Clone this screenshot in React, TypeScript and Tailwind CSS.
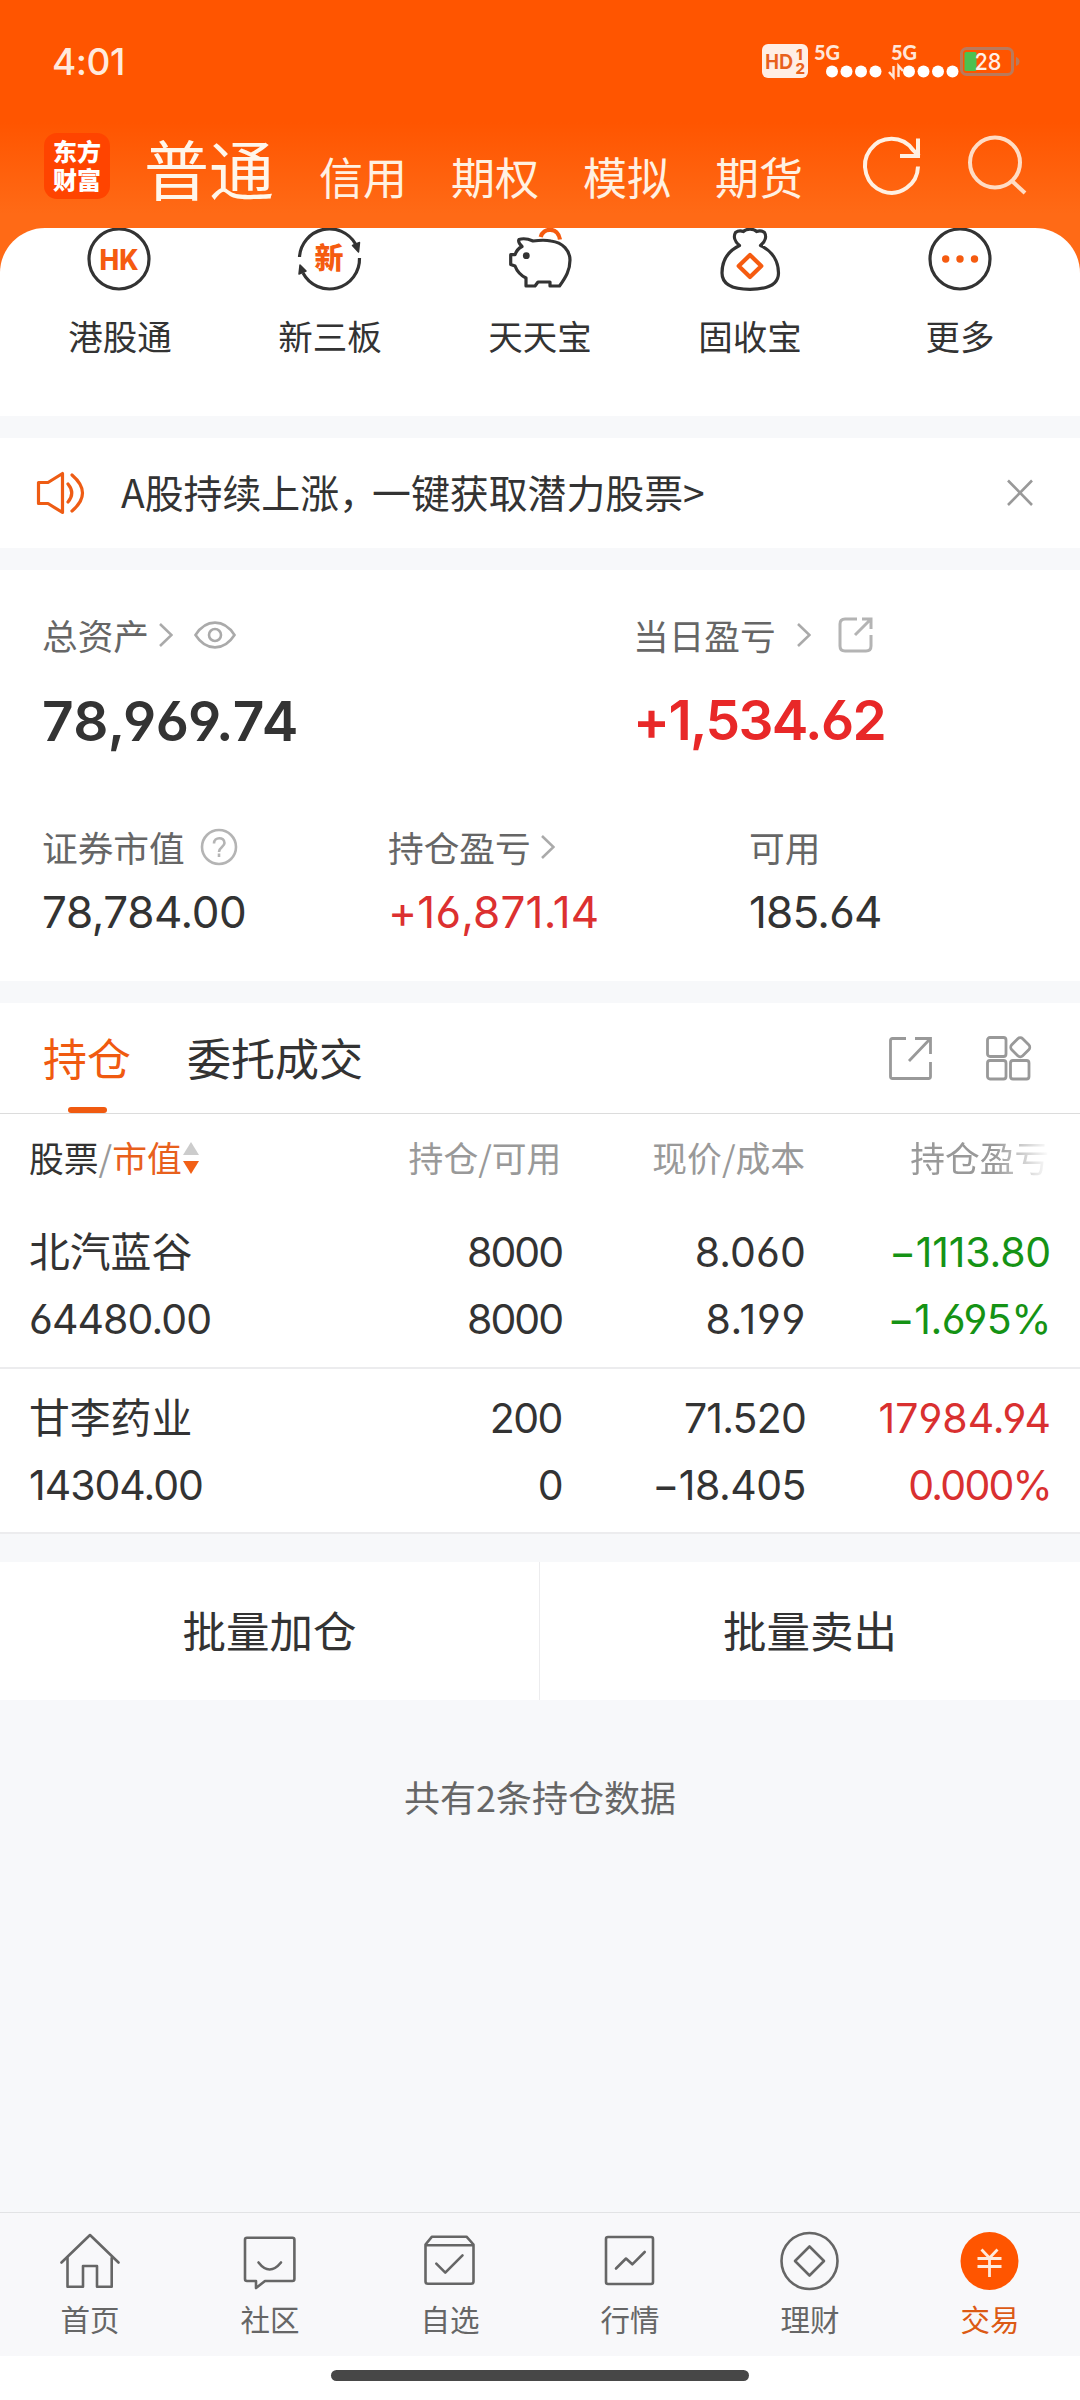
import React from 'react';

const num =
  "font-[Inter,'Noto_Sans_CJK_SC',sans-serif] [font-feature-settings:'cv03','cv04']";

type IconProps = { children: React.ReactNode };

function CategoryIcon({ children }: IconProps) {
  return (
    <svg width="70" height="66" viewBox="0 4 70 66" fill="none" stroke="#333" strokeWidth="3.200" strokeLinejoin="round">
      {children}
    </svg>
  );
}

function NavIcon({ children }: IconProps) {
  return (
    <svg width="60" height="60" viewBox="0 0 60 60" fill="none" stroke="#666" strokeWidth="2.600" strokeLinecap="round" strokeLinejoin="round">
      {children}
    </svg>
  );
}

function Chevron() {
  return (
    <svg width="14" height="24" viewBox="0 0 14 24" fill="none" stroke="#aaa" strokeWidth="2.600">
      <path d="M1 1L12.500 12L1 23" />
    </svg>
  );
}

function StatusBar() {
  return (
    <div className="flex h-[122px] items-center justify-between pr-[58px] pl-[52px]">
      <span className={`${num} mt-[2px] text-[37px] font-medium tracking-[-0.5px] text-[#ffeadd]`}>4:01</span>
      <svg width="262" height="60" viewBox="760 31 262 60" fontFamily="Lato, sans-serif" fontWeight="900">
        <rect x="762" y="44" width="46" height="34" rx="6" fill="#ffeee4" />
        <text x="765" y="69" fontSize="21.500" textLength="28" lengthAdjust="spacingAndGlyphs" fill="#e8601c">HD</text>
        <text x="796" y="60" fontSize="15" fill="#e8601c" fontFamily="Inter" fontWeight="800">1</text>
        <text x="795.500" y="74" fontSize="15" fill="#e8601c" fontFamily="Inter" fontWeight="800">2</text>
        <text x="814" y="59.500" fontSize="20.500" textLength="26" lengthAdjust="spacingAndGlyphs" fill="#ffe6d8">5G</text>
        <text x="891" y="59.500" fontSize="20.500" textLength="26" lengthAdjust="spacingAndGlyphs" fill="#ffe6d8">5G</text>
        {[832, 846.5, 861, 875.5, 909, 923.5, 938, 952.5].map((x) => (
          <circle key={x} cx={x} cy="71.500" r="6" fill="#fff" />
        ))}
        <path d="M893.500 66v11l-4.500-5M898.500 77V66l4.500 5" fill="none" stroke="#ffe6d8" strokeWidth="2.400" />
        <rect x="961.500" y="48.500" width="51" height="26" rx="5" fill="none" stroke="#b97a5c" strokeWidth="3" />
        <path d="M1016 57q3.500 1 3.500 4.500t-3.500 4.500z" fill="#b97a5c" />
        <rect x="964.500" y="52" width="12" height="19" rx="1.500" fill="#4cc150" />
        <text x="974.500" y="70" fontSize="23" fontFamily="Inter" fontWeight="500" textLength="27" lengthAdjust="spacingAndGlyphs" fill="#fff0e6">28</text>
      </svg>
    </div>
  );
}

function Header() {
  return (
    <header className="h-[274px] bg-[linear-gradient(#ff5500_0px,#ff5500_122px,#ff6a16_214px,#ff6a16_274px)]">
      <StatusBar />
      <div className="flex h-[106px] items-start pl-[44px]">
        <div className="mt-[11px] flex h-[66px] w-[66px] flex-col items-center rounded-[13px] bg-[#ff4400] pt-[4px] text-[24px] leading-[28px] font-black text-white">
          <span>东方</span>
          <span>财富</span>
        </div>
        <span className="mt-[12px] ml-[34px] text-[65px] leading-[66px] font-normal text-[#fff6ea]">普通</span>
        <nav className="mt-[32px] ml-[45px] flex gap-[44px] text-[44px] leading-[44px] text-[#fff1e2]">
          <span>信用</span>
          <span>期权</span>
          <span>模拟</span>
          <span>期货</span>
        </nav>
        <svg className="mt-[10px] ml-[57px]" width="66" height="70" viewBox="860 132 66 70" fill="none" stroke="#fff0e2" strokeWidth="4">
          <path d="M918 166.500A26.500 27 0 1 1 913 150L919 156" />
          <path d="M918 138.500V156H900" />
        </svg>
        <svg className="mt-[10px] ml-[41px]" width="64" height="70" viewBox="967 132 64 70" fill="none" stroke="#ffdcc4" strokeWidth="4">
          <circle cx="995" cy="162.500" r="25" />
          <path d="M1012 181L1025 193" />
        </svg>
      </div>
    </header>
  );
}

const categories = [
  {
    label: '港股通',
    icon: (
      <>
        <circle cx="34" cy="35" r="30" />
        <text x="14.500" y="45.500" fontSize="29" fontWeight="800" fontFamily="Inter" textLength="39" lengthAdjust="spacingAndGlyphs" fill="#f55b10" stroke="none">HK</text>
      </>
    ),
  },
  {
    label: '新三板',
    icon: (
      <>
        <path d="M4.500 33A30 30 0 0 1 60.500 20" />
        <path d="M64.500 34A30 30 0 0 1 8 49" />
        <path d="M57.500 21.500L64.500 18.500L63.500 28Z" fill="#333" strokeWidth="1.500" />
        <path d="M5 41L4 50L11 47Z" fill="#333" strokeWidth="1.500" />
        <text x="19.500" y="45" fontSize="29" fontWeight="900" fill="#f55b10" stroke="none">新</text>
      </>
    ),
  },
  {
    label: '天天宝',
    icon: (
      <>
        <path d="M5.700 30.700H10Q12 25 17 22.500Q12.500 18 14 15.500Q20 13.500 28 17Q39 15.500 46 17C58 18.500 65 27 65 36C65 46 61 53 54.500 62H45V58H33L30 62H21V54Q13 50 10 42L5.700 40.500Z" />
        <circle cx="21.300" cy="31.700" r="3.400" fill="#333" stroke="none" />
        <path d="M35.700 13C38 3.500 53 2.500 55 15.500" stroke="#f55b10" strokeWidth="4.200" />
      </>
    ),
  },
  {
    label: '固收宝',
    icon: (
      <>
        <path d="M24.500 21.500C19 17 18.500 12 20.500 8.500C23 6.500 26 6.500 28.500 7.500C31 4.500 39 4.500 41.500 7.500C44 6.500 47 6.500 49.500 8.500C51.500 12 51 17 45.500 21.500C57 27 63.500 37 63.500 49C63.500 61 51 65.300 35 65.300C19 65.300 7 61 7 49C7 37 13 27 24.500 21.500Z" />
        <path d="M35 31L46.300 42L35 53L23.700 42Z" stroke="#f55b10" strokeWidth="4.200" />
      </>
    ),
  },
  {
    label: '更多',
    icon: (
      <>
        <circle cx="35" cy="35" r="30" />
        <g fill="#f55b10" stroke="none">
          <circle cx="20.700" cy="35" r="3.700" />
          <circle cx="35" cy="35" r="3.700" />
          <circle cx="49.500" cy="35" r="3.700" />
        </g>
      </>
    ),
  },
];

function Categories() {
  return (
    <section className="relative z-10 mt-[-46px] flex h-[188px] justify-between overflow-hidden rounded-t-[45px] bg-white px-[15px]">
      {categories.map((c) => (
        <div key={c.label} className="flex w-[210px] flex-col items-center">
          <CategoryIcon>{c.icon}</CategoryIcon>
          <span className="mt-[21px] text-[34.5px] leading-[40px] text-[#333]">{c.label}</span>
        </div>
      ))}
    </section>
  );
}

function Notice() {
  return (
    <section className="mt-[22px] flex h-[110px] items-center bg-white pr-[46px] pl-[36px]">
      <svg width="50" height="44" viewBox="0 0 50 44" fill="none" stroke="#ee5c14" strokeWidth="3.200" strokeLinejoin="round">
        <path d="M2.500 11.500H12L26.500 2.500V41.500L12 32.500H2.500Z" />
        <path d="M32 13Q39.500 22 32 31M36 4Q57 22 36 40" strokeLinecap="round" />
      </svg>
      <span className="mt-[-3px] ml-[35px] flex-1 text-[38.9px] whitespace-nowrap text-[#333]">
        A股持续上涨<span className="tracking-[-6px]">，</span>一键获取潜力股票&gt;
      </span>
      <svg width="28" height="28" viewBox="0 0 28 28" fill="none" stroke="#999" strokeWidth="2.600">
        <path d="M2 1.500L26 26M26 1.500L2 26" />
      </svg>
    </section>
  );
}

function Assets() {
  return (
    <section className="mt-[22px] h-[411px] bg-white px-[42px] pt-[43px] text-[#333]">
      <div className="flex">
        <div className="w-[591px]">
          <div className="flex h-[44px] items-center text-[35.7px] leading-[44px] text-[#666]">
            <span className="mr-[10px]">总资产</span>
            <Chevron />
            <svg className="ml-[20px]" width="44" height="32" viewBox="0 0 44 32" fill="none" stroke="#aaa" strokeWidth="2.600">
              <path d="M2.500 16C13 -0.500 31 -0.500 41.500 16C31 32.500 13 32.500 2.500 16Z" />
              <circle cx="22" cy="16" r="6" />
            </svg>
          </div>
          <div className={`${num} mt-[36px] text-[55px] leading-[56px] font-semibold tracking-[0.4px]`}>78,969.74</div>
        </div>
        <div>
          <div className="flex h-[44px] items-center text-[35.7px] leading-[44px] text-[#666]">
            <span className="mr-[21px]">当日盈亏</span>
            <Chevron />
            <svg className="ml-[26px]" width="38" height="38" viewBox="0 0 38 38" fill="none" stroke="#b4b4b4" strokeWidth="3">
              <path d="M20 3H8Q3 3 3 8V30Q3 35 8 35H29Q34 35 34 30V19" />
              <path d="M25 3H34V13M34 3L18 19" />
            </svg>
          </div>
          <div className={`${num} mt-[35px] text-[55px] leading-[56px] font-semibold tracking-[-1.6px] text-[#e82828]`}>+1,534.62</div>
        </div>
      </div>
      <div className="mt-[76px] flex">
        <div className="w-[346px]">
          <div className="flex h-[44px] items-center text-[35.7px] leading-[44px] text-[#666]">
            <span className="mr-[15px]">证券市值</span>
            <svg width="38" height="38" viewBox="0 0 38 38" fill="none" stroke="#b4b4b4" strokeWidth="2.600">
              <circle cx="19" cy="19" r="17" />
              <path d="M14 15.500C14 8.500 24.500 8.500 24.500 15C24.500 19 19 19 19 24" />
              <path d="M19 25.500V29" />
            </svg>
          </div>
          <Value className="tracking-[-0.4px] text-[#333]">78,784.00</Value>
        </div>
        <div className="w-[361px]">
          <div className="flex h-[44px] items-center text-[35.7px] leading-[44px] text-[#666]">
            <span className="mr-[10px]">持仓盈亏</span>
            <Chevron />
          </div>
          <Value className="tracking-[0.2px] text-[#dc3030]">+16,871.14</Value>
        </div>
        <div>
          <div className="h-[44px] text-[35.7px] leading-[44px] text-[#666]">可用</div>
          <Value className="tracking-[-0.8px] text-[#333]">185.64</Value>
        </div>
      </div>
    </section>
  );
}

function Value({ children, className }: { children: string; className: string }) {
  return <div className={`${num} mt-[21px] text-[44px] leading-[44px] ${className}`}>{children}</div>;
}

type Cell = [text: string, tracking: string];

const holdings: { name: string; value: Cell; columns: { cells: Cell[]; className: string }[] }[] = [
  {
    name: '北汽蓝谷',
    value: ['64480.00', 'tracking-[-0.9px]'],
    columns: [
      { cells: [['8000', 'tracking-[-2px]'], ['8000', 'tracking-[-2px]']], className: 'w-[270px]' },
      { cells: [['8.060', 'tracking-[0.1px]'], ['8.199', 'tracking-[0.7px]']], className: 'w-[244px]' },
      { cells: [['−1113.80', 'tracking-[-0.2px]'], ['−1.695%', 'tracking-[-0.5px]']], className: 'flex-1 text-[#159315]' },
    ],
  },
  {
    name: '甘李药业',
    value: ['14304.00', 'tracking-[-1px]'],
    columns: [
      { cells: [['200', 'tracking-[-1.5px]'], ['0', 'tracking-[-1.5px]']], className: 'w-[270px]' },
      { cells: [['71.520', 'tracking-[-0.8px]'], ['−18.405', 'tracking-[-0.5px]']], className: 'w-[244px]' },
      { cells: [['17984.94', 'tracking-[0px]'], ['0.000%', 'tracking-[-1.8px]']], className: 'flex-1 text-[#d93030]' },
    ],
  },
];

function Holdings() {
  return (
    <section className="mt-[22px] h-[531px] border-b-2 border-[#ececee] bg-white">
      <div className="flex h-[111px] items-center border-b border-[#dcdcdc] pr-[47px] pl-[43px] text-[44px] text-[#333]">
        <div className="flex h-full flex-col items-center text-[#f05a10]">
          <span className="h-[104px] leading-[108px]">持仓</span>
          <span className="h-[6px] w-[39px] rounded-full bg-[#f05a10]" />
        </div>
        <span className="ml-[56px] flex-1 self-start leading-[108px]">委托成交</span>
        <svg width="44" height="44" viewBox="0 0 44 44" fill="none" stroke="#999" strokeWidth="2.800">
          <path d="M18 2.500H4.500Q2.500 2.500 2.500 4.500V40.500Q2.500 42.500 4.500 42.500H40.500Q42.500 42.500 42.500 40.500V26" />
          <path d="M27 2.500H42.500V18M42 3L21 25" />
        </svg>
        <svg className="ml-[53px]" width="48" height="46" viewBox="0 0 48 46" fill="none" stroke="#999" strokeWidth="2.800" strokeLinejoin="round">
          <rect x="2.500" y="2.500" width="18.500" height="19" rx="2.500" />
          <rect x="2.500" y="25.500" width="18.500" height="18.500" rx="2.500" />
          <rect x="25.500" y="25.500" width="18.500" height="18.500" rx="2.500" />
          <rect x="27.500" y="4.500" width="15.500" height="15.500" rx="3.500" transform="rotate(45 35.250 12.250)" />
        </svg>
      </div>
      <div className="flex h-[87px] items-center pr-[30px] pl-[29px] text-[34.8px] leading-[87px] text-[#999]">
        <div className="flex w-[263px] items-center whitespace-nowrap">
          <span className="text-[#333]">股票</span>/<span className="text-[#e8601c]">市值</span>
          <svg width="16" height="32" viewBox="0 0 16 32" className="ml-[1px]">
            <path d="M8 0L16 13H0Z" fill="#ccc" />
            <path d="M8 32L0 19H16Z" fill="#f26016" />
          </svg>
        </div>
        <span className="w-[270px] text-right">持仓/可用</span>
        <span className="w-[244px] text-right">现价/成本</span>
        <span className="ml-[105px] w-[140px] whitespace-nowrap [mask-image:linear-gradient(to_right,#000_60%,transparent_100%)]">持仓盈亏</span>
      </div>
      {holdings.map((h, i) => (
        <div
          key={h.name}
          className={`${num} flex h-[166px] pr-[29px] pl-[29px] text-[41px] leading-[67px] text-[#333] ${i === 0 ? 'pt-[18px]' : 'border-t-2 border-[#ececee] pt-[16px]'}`}
        >
          <div className="w-[263px]">
            <div className="text-[40.8px]">{h.name}</div>
            <div className={h.value[1]}>{h.value[0]}</div>
          </div>
          {h.columns.map((col, c) => (
            <div key={c} className={`text-right ${col.className}`}>
              {col.cells.map(([text, tracking], r) => (
                <div key={r} className={tracking}>{text}</div>
              ))}
            </div>
          ))}
        </div>
      ))}
    </section>
  );
}

const tabs = [
  {
    label: '首页',
    icon: (
      <>
        <path d="M1.500 31.500L30 4L58.500 31.500" />
        <path d="M7.500 27V55.700H23V35H37V55.700H51.700V27" />
      </>
    ),
  },
  {
    label: '社区',
    icon: (
      <>
        <path d="M7 6.700H52.400Q54.400 6.700 54.400 8.700V48Q54.400 50 52.400 50H25L16 57V50H7Q5 50 5 48V8.700Q5 6.700 7 6.700Z" />
        <path d="M18.500 31.500Q29.500 45.500 41 31.500" />
      </>
    ),
  },
  {
    label: '自选',
    icon: (
      <>
        <path d="M5.500 14.300H53.500V50.500Q53.500 52.700 51 52.700H8Q5.500 52.700 5.500 50.500ZM5.500 13.500L12 5.700H46.500L53.500 13.500" />
        <path d="M16.300 32.700L25.300 41.700L42.500 24.300" />
      </>
    ),
  },
  {
    label: '行情',
    icon: (
      <>
        <rect x="6" y="6" width="47" height="47" rx="2" />
        <path d="M16 37.500L26 27.500L32.300 33.300L44.700 21" />
      </>
    ),
  },
  {
    label: '理财',
    icon: (
      <>
        <circle cx="29.500" cy="30" r="28" />
        <path d="M29.500 15.500L44 30L29.500 44.500L15 30Z" />
      </>
    ),
  },
  {
    label: '交易',
    active: true,
    icon: (
      <>
        <circle cx="29.500" cy="30" r="29" fill="#ff5500" stroke="none" />
        <path d="M21.500 18.500L29.500 27L37.500 18.500M29.500 27V46M17.500 27.500H41.500M17.500 35.500H41.500" stroke="#ffe9dc" strokeLinecap="butt" strokeWidth="2.800" />
      </>
    ),
  },
];

function BottomNav() {
  return (
    <nav className="flex h-[144px] border-t border-[#e2e3e5] bg-[#f8f8fa]">
      {tabs.map((t) => (
        <div key={t.label} className="flex flex-1 flex-col items-center pt-[18px]">
          <NavIcon>{t.icon}</NavIcon>
          <span className={`mt-[9px] text-[29.5px] leading-[36px] ${t.active ? 'text-[#dc5a14]' : 'text-[#666]'}`}>{t.label}</span>
        </div>
      ))}
    </nav>
  );
}

export default function App() {
  return (
    <div className="flex h-[2400px] w-[1080px] flex-col overflow-hidden bg-[#f7f8fa] font-['Noto_Sans_CJK_SC',sans-serif]">
      <Header />
      <Categories />
      <Notice />
      <Assets />
      <Holdings />
      <section className="mt-[28px] flex h-[138px] bg-white text-[43.5px] leading-[136px] text-[#333]">
        <div className="w-[540px] border-r border-[#ececee] text-center">批量加仓</div>
        <div className="flex-1 text-center">批量卖出</div>
      </section>
      <p className="mt-[74px] flex-1 text-center text-[36px] leading-[44px] text-[#666]">共有2条持仓数据</p>
      <BottomNav />
      <div className="flex h-[44px] justify-center bg-white pt-[14px]">
        <div className="h-[11px] w-[418px] rounded-full bg-[#474747]" />
      </div>
    </div>
  );
}
